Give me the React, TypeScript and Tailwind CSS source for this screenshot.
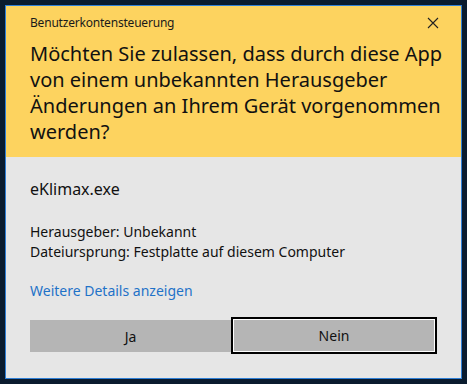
import React from "react";

export default function App() {
  return (
    <div className="w-[467px] h-[384px] bg-[#0a1b2e] p-[5px] pb-[5px]" style={{ fontFamily: '"Noto Sans", "Open Sans", sans-serif' }}>
      <div className="w-[457px] h-[374px] border border-[#2f7fd6] flex flex-col bg-[#e6e6e6]">
        <div className="bg-[#fdd35f] h-[151px] px-[24px] pt-[8px]">
          <div className="flex items-center justify-between h-[18px]">
            <span className="text-[12px] text-[#1a1a1a] tracking-[-0.2px]">Benutzerkontensteuerung</span>
            <svg width="12" height="12" viewBox="0 0 12 12" className="mr-[-2px]">
              <path d="M1 1 L11 11 M11 1 L1 11" stroke="#222" strokeWidth="1.1" />
            </svg>
          </div>
          <div className="mt-[9px] text-[20px] leading-[26px] text-[#111] whitespace-nowrap">
            Möchten Sie zulassen, dass durch diese App
            <br />
            von einem unbekannten Herausgeber
            <br />
            Änderungen an Ihrem Gerät vorgenommen
            <br />
            werden?
          </div>
        </div>
        <div className="px-[24px] flex flex-col flex-1">
          <div className="mt-[21px] text-[16px] leading-[22px] text-[#111]">eKlimax.exe</div>
          <div className="mt-[22px] text-[14px] leading-[20px] text-[#111]">
            <div>Herausgeber: Unbekannt</div>
            <div>Dateiursprung: Festplatte auf diesem Computer</div>
          </div>
          <div className="mt-[19px] text-[14px] leading-[20px] text-[#1f72c8]">Weitere Details anzeigen</div>
          <div className="mt-[16px] flex">
            <div className="w-[202px] h-[32px] mt-[3px] bg-[#b5b5b5] flex items-center justify-center text-[14px] text-[#111]">Ja</div>
            <div className="w-[207px] h-[37px] border-2 border-black p-[1px] bg-white">
              <div className="w-full h-full bg-[#b5b5b5] flex items-center justify-center text-[14px] text-[#111]">Nein</div>
            </div>
          </div>
        </div>
      </div>
    </div>
  );
}
